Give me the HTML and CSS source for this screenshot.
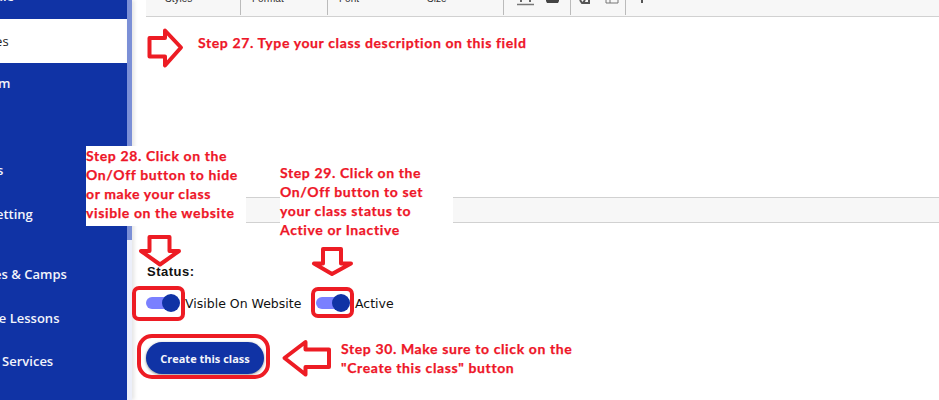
FILE: index.html
```html
<!DOCTYPE html>
<html lang="en">
<head>
<meta charset="utf-8">
<title>Create class</title>
<link rel="stylesheet" href="styles.css">
</head>
<body>
<div class="page">
  <nav class="sidebar">
    <div class="nav-item nav-first">Gift Sale</div>
    <div class="nav-item nav-active">Classes</div>
    <div class="nav-item">Custom</div>
    <div class="nav-item nav-empty"></div>
    <div class="nav-item">Events</div>
    <div class="nav-item">Site Setting</div>
    <div class="nav-item nav-gap">Classes &amp; Camps</div>
    <div class="nav-item">Private Lessons</div>
    <div class="nav-item">Other Services</div>
  </nav>
  <div class="scrollbar"><div class="scroll-thumb"></div></div>
  <main class="main">
    <div class="toolbar">
      <span class="tb-label tb-styles">Styles</span>
      <span class="tb-sep"></span>
      <span class="tb-label tb-format">Format</span>
      <span class="tb-sep"></span>
      <span class="tb-label tb-font">Font</span>
      <span class="tb-label tb-size">Size</span>
      <span class="tb-sep"></span>
      <svg class="tb-icon tb-i1" viewBox="0 0 58 16" width="58" height="16">
        <path d="M13 0v2M22 0v2" stroke="#666" stroke-width="2"/>
        <path d="M9 4.500h17" stroke="#777" stroke-width="1.500"/>
        <path d="M38 0h13v1l-1 2h-11l-1-2z" fill="#444"/>
      </svg>
      <span class="tb-sep"></span>
      <svg class="tb-icon tb-i2" viewBox="0 0 54 16" width="54" height="16">
        <path d="M9 0l2 3M14 0l-2 3h3" stroke="#555" stroke-width="2" fill="none"/>
        <path d="M18 0v3h-5" stroke="#555" stroke-width="2" fill="none"/>
        <path d="M35 0v3h12v-3M39 0v3" stroke="#777" stroke-width="1" fill="none"/>
      </svg>
      <span class="tb-sep"></span>
      <svg class="tb-icon tb-i3" viewBox="0 0 10 16" width="10" height="16">
        <path d="M5 0v3" stroke="#555" stroke-width="2"/>
      </svg>
    </div>
    <div class="editor"></div>
    <div class="bar"></div>
    <div class="form">
      <div class="status-label">Status:</div>
      <div class="toggles">
        <span class="toggle"><span class="knob"></span></span>
        <span class="toggle-text toggle-text-a">Visible On Website</span>
        <span class="toggle"><span class="knob"></span></span>
        <span class="toggle-text">Active</span>
      </div>
      <button class="create" type="button">Create this class</button>
    </div>
  </main>

  <div class="note note-27">Step 27. Type your class description on this field</div>
  <div class="note note-28">Step 28. Click on the<br>On/Off button to hide<br>or make your class<br>visible on the website</div>
  <div class="note note-29">Step 29. Click on the<br>On/Off button to set<br>your class status to<br>Active or Inactive</div>
  <div class="note note-30">Step 30. Make sure to click on the<br>"Create this class" button</div>

  <svg class="marks" viewBox="0 0 939 400" width="939" height="400">
    <path d="M149.500 38H165V30.500L181 47.500L165 65.500V56.500H149.500Z"/>
    <path d="M149.500 237H169.500V251H179L160 264.500L141 251H149.500Z"/>
    <path d="M323 249H341V263.500H351L332 274L314 263.500H323Z"/>
    <path d="M329 349.500H305.500V342L284.500 358L305.500 374.500V367H329Z"/>
    <rect x="134" y="288" width="49" height="31" rx="5"/>
    <rect x="313" y="289" width="39" height="27" rx="5"/>
    <rect x="139" y="336" width="129" height="41" rx="13"/>
  </svg>
</div>
</body>
</html>
```
FILE: styles.css
```css
* { box-sizing: border-box; }
html, body { margin: 0; padding: 0; background: #fff; }
.page {
  position: relative;
  display: flex;
  width: 939px;
  height: 400px;
  overflow: hidden;
  font-family: "Liberation Sans", Arial, sans-serif;
}
.sidebar {
  flex: 0 0 127px;
  height: 400px;
  background: #1033a5;
  overflow: hidden;
  color: #f2f4fb;
  font-family: "Open Sans", sans-serif;
  font-size: 13px;
  font-weight: 600;
}
.nav-item {
  height: 43.500px;
  line-height: 40px;
  margin-left: -38px;
  white-space: nowrap;
}
.nav-first { margin-top: -24.500px; }
.nav-active {
  height: 44px;
  line-height: 44px;
  margin-left: -36px;
  background: #fff;
  color: #222;
  font-weight: 400;
}
.nav-gap { margin-top: 17px; }
.scrollbar {
  flex: 0 0 5px;
  height: 400px;
  background: #eceffa;
  box-shadow: 2px 0 4px rgba(0, 0, 0, .12);
}
.scroll-thumb { height: 240px; background: #7b8fd6; }
.main {
  flex: 1;
  min-width: 0;
  padding-left: 14px;
}
.toolbar {
  display: flex;
  align-items: flex-end;
  height: 17px;
  background: #f7f7f7;
  border-bottom: 1.500px solid #d1d1d1;
  padding-bottom: 1px;
  overflow: hidden;
}
.tb-label {
  align-self: flex-start;
  margin-top: -7px;
  font-size: 10px;
  line-height: 12px;
  color: #333;
}
.tb-styles { margin-left: 19px; width: 75px; }
.tb-format { margin-left: 11px; width: 75px; }
.tb-font { margin-left: 11px; width: 88px; }
.tb-size { width: 76px; }
.tb-sep { flex: none; width: 1px; height: 15px; background: #bbb; }
.tb-icon { flex: none; align-self: flex-start; }
.tb-i1 { width: 66px; }
.tb-i2 { width: 54px; }
.tb-i3 { margin-left: 11px; }
.editor { height: 180px; background: #fff; }
.bar {
  height: 26px;
  background: #f7f7f7;
  border-top: 1px solid #d1d1d1;
  border-bottom: 1px solid #d1d1d1;
}
.form { padding-top: 41px; }
.status-label {
  margin-left: 1px;
  font-size: 13px;
  font-weight: 700;
  line-height: 16px;
  letter-spacing: .5px;
  color: #111;
}
.toggles {
  display: flex;
  align-items: center;
  height: 22px;
  margin-top: 12px;
}
.toggle {
  position: relative;
  flex: none;
  width: 32px;
  height: 12px;
  border-radius: 6px;
  background: #7a80ff;
}
.knob {
  position: absolute;
  right: -2px;
  top: -3px;
  width: 18px;
  height: 18px;
  border-radius: 50%;
  background: #1033a5;
}
.toggle-text {
  margin-left: 7px;
  font-family: "DejaVu Sans", sans-serif;
  font-size: 12.500px;
  color: #111;
  white-space: nowrap;
}
.toggle-text-a { width: 131px; flex: none; }
.create {
  display: block;
  width: 118px;
  height: 32px;
  margin-top: 28px;
  padding: 0;
  border: 0;
  border-radius: 16px;
  background: #1033a5;
  box-shadow: 0 1px 3px rgba(0, 0, 0, .45);
  color: #f4f5fb;
  font-family: "Open Sans", sans-serif;
  font-size: 11px;
  font-weight: 700;
  text-align: center;
}
.note {
  position: absolute;
  font-family: Lato, sans-serif;
  font-size: 14px;
  font-weight: 700;
  line-height: 19px;
  color: #ee1628;
  -webkit-text-stroke: .25px #ee1628;
  letter-spacing: .62px;
  white-space: nowrap;
}
.note-27 { left: 198px; top: 33px; }
.note-28 { left: 86px; top: 146px; width: 160px; height: 80px; background: #fff; }
.note-29 { left: 280px; top: 163px; width: 173px; height: 80px; background: #fff; }
.note-30 { left: 341px; top: 339px; }
.marks { position: absolute; left: 0; top: 0; pointer-events: none; }
.marks path, .marks rect {
  fill: none;
  stroke: #ed1c24;
  stroke-width: 4;
  stroke-linejoin: round;
}
```
